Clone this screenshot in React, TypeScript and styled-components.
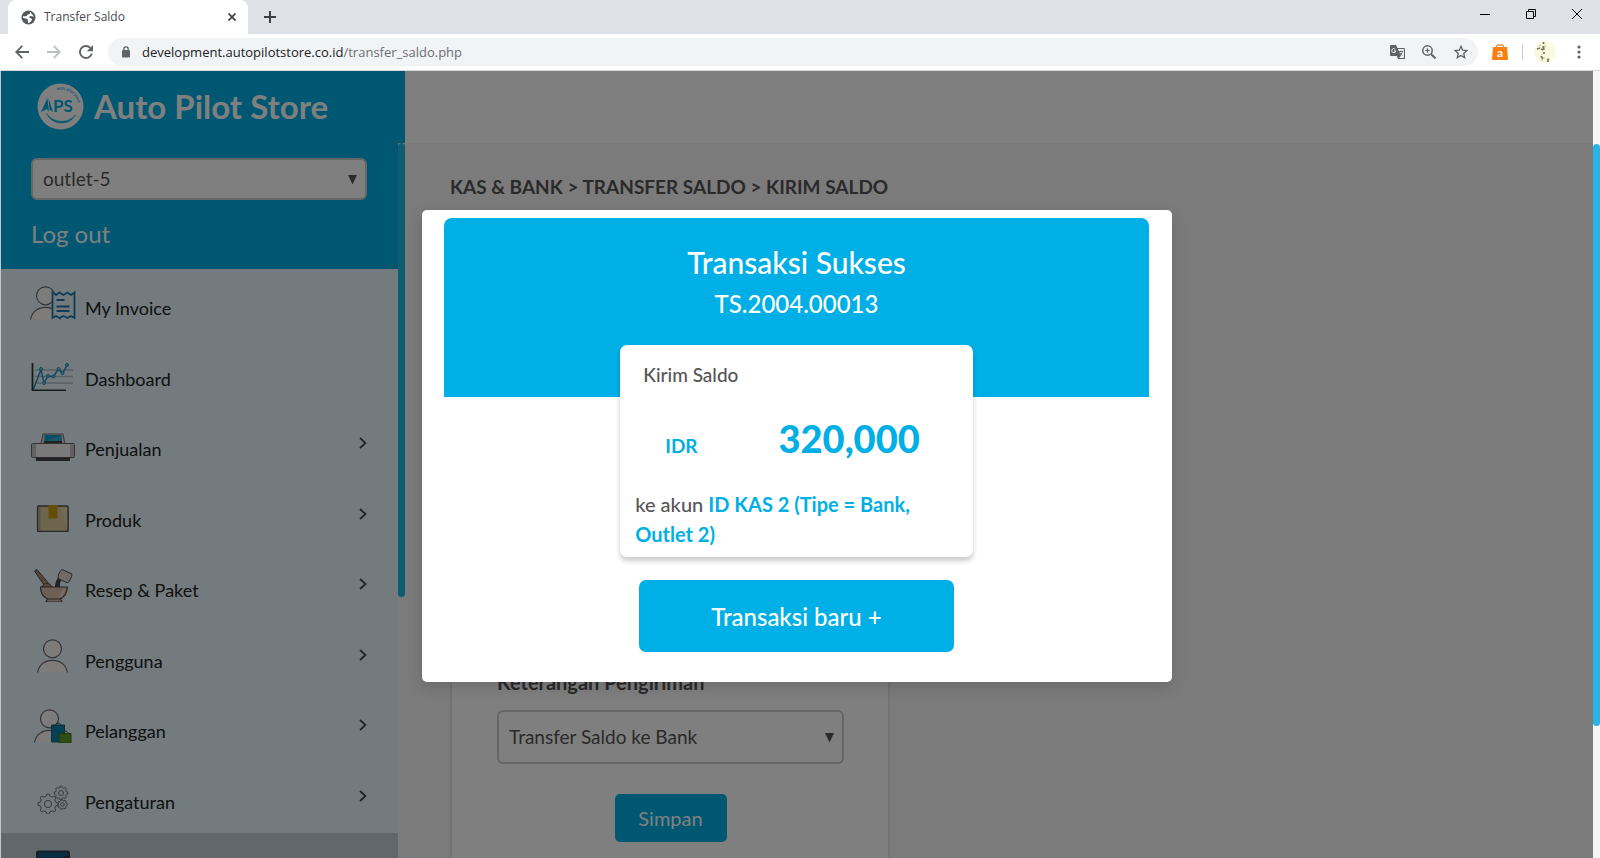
import React from "react";
import styled, { createGlobalStyle } from "styled-components";

const BLUE = "#00afe5";
const SANS = '"Lato", "Open Sans", "Liberation Sans", sans-serif';
const CHROME_FONT = '"Open Sans", "Noto Sans", sans-serif';

const GlobalStyle = createGlobalStyle`
  *, *::before, *::after { box-sizing: border-box; }
  body { margin: 0; font-family: ${SANS}; color: #555; background: #fff; }
  button, select { font: inherit; }
  svg { display: block; flex: none; }
`;

const Window = styled.div`
  height: 100vh;
  display: flex;
  flex-direction: column;
  overflow: hidden;
`;

/* ---------- browser frame ---------- */

const TabStrip = styled.div`
  display: flex;
  flex: none;
  height: 34px;
  padding-left: 8px;
  background: #dee1e6;
`;

const Tab = styled.div`
  display: flex;
  align-items: center;
  gap: 8px;
  width: 240px;
  padding: 0 10px 0 13px;
  border-radius: 8px 8px 0 0;
  background: #fff;
  font: 12px/16px ${CHROME_FONT};
  color: #45494d;
`;

const TabTitle = styled.span`
  flex: 1;
`;

const IconButton = styled.button<{ $w?: number }>`
  display: flex;
  align-items: center;
  justify-content: center;
  flex: none;
  width: ${(p) => p.$w ?? 32}px;
  padding: 0;
  border: 0;
  background: none;
  color: #5f6368;
`;

const WindowControls = styled.div`
  display: flex;
  margin-left: auto;
  padding-bottom: 6px;
`;

const Toolbar = styled.div`
  display: flex;
  flex: none;
  align-items: center;
  height: 37px;
  padding: 0 5px 0 6px;
  border-bottom: 1px solid #d5d7d9;
  background: #fff;
`;

const AddressBar = styled.div`
  display: flex;
  flex: 1;
  align-items: center;
  height: 28px;
  margin: 0 6px;
  padding: 0 1px 0 13px;
  border-radius: 14px;
  background: #f1f3f4;
  font: 13px/20px ${CHROME_FONT};
  color: #202124;
`;

const Url = styled.span`
  flex: 1;
  padding-left: 11px;
  span { color: #6b6f74; }
`;

const Divider = styled.span`
  width: 1px;
  height: 16px;
  margin: 0 4px 0 6px;
  background: #c8cacd;
`;

/* ---------- page ---------- */

const Viewport = styled.div`
  display: flex;
  flex: 1;
  min-height: 0;
  border-left: 1px solid #c4c8ca;
`;

const Page = styled.div`
  position: relative;
  display: flex;
  flex: 1;
  min-width: 0;
  overflow: hidden;
  background: #f6f6f6;
`;

const ScrollTrack = styled.div<{ $top?: number }>`
  flex: none;
  width: 7px;
  padding-top: ${(p) => p.$top ?? 0}px;
  background: #f6f6f6;
`;

const ScrollThumb = styled.div<{ $h: number; $color: string }>`
  height: ${(p) => p.$h}px;
  border-radius: 4px;
  background: ${(p) => p.$color};
`;

const Sidebar = styled.aside`
  display: flex;
  flex: none;
  flex-direction: column;
  width: 404px;
`;

const Brand = styled.div`
  display: flex;
  flex: none;
  align-items: center;
  gap: 10px;
  height: 72px;
  padding: 0 0 2px 36px;
  background: ${BLUE};
  color: #fff;
  font-size: 33px;
  line-height: 40px;
  font-weight: 700;
`;

const SidebarScroll = styled.div`
  display: flex;
  flex: 1;
  min-height: 0;
`;

const SidebarBody = styled.div`
  flex: 1;
  background: #e6f6fc;
`;

const Account = styled.div`
  height: 126px;
  padding: 15px 31px 0 30px;
  background: ${BLUE};
`;

const LogOut = styled.a`
  display: inline-block;
  margin-top: 18px;
  color: #fff;
  font-size: 24px;
  line-height: 32px;
  text-decoration: none;
`;

const SelectBox = styled.div`
  position: relative;
  svg {
    position: absolute;
    top: calc(50% - 4px);
    right: 10px;
    pointer-events: none;
  }
`;

const Select = styled.select<{ $h: number }>`
  appearance: none;
  display: block;
  width: 100%;
  height: ${(p) => p.$h}px;
  padding: 0 10px 1px;
  border: 2px solid #ccc;
  border-radius: 6px;
  background: #fff;
  color: #555;
  font-size: 19px;
`;

const Menu = styled.nav`
  display: flex;
  flex-direction: column;
  height: 564px;
`;

const MenuItem = styled.a`
  display: flex;
  flex: 1;
  align-items: flex-start;
  gap: 9px;
  padding: 17px 31px 0 29px;
  color: #222;
  font-size: 18px;
  line-height: 24px;
  text-decoration: none;
`;

const MenuLabel = styled.span`
  flex: 1;
  padding-top: 10px;
`;

const Chevron = styled.svg`
  margin-top: 10px;
`;

const ActiveItem = styled.a`
  display: block;
  height: 71px;
  padding: 17px 29px 0;
  background: #c5ced6;
`;

const Main = styled.main`
  flex: 1;
  min-width: 0;
`;

const TopBar = styled.div`
  height: 72px;
  background: #fff;
`;

const Content = styled.div`
  padding: 32px 45px 0;
`;

const Breadcrumb = styled.h1`
  margin: 0;
  font-size: 19px;
  line-height: 24px;
  font-weight: 700;
`;

const FormCard = styled.form`
  max-width: 440px;
  height: 720px;
  margin-top: 16px;
  padding: 453px 44px 0 45px;
  border: 2px solid #e6e6e6;
  background: #fff;
`;

const FieldLabel = styled.label`
  display: block;
  margin-bottom: 16px;
  font-size: 20px;
  line-height: 24px;
  font-weight: 700;
`;

const SubmitButton = styled.button`
  display: block;
  width: 112px;
  height: 48px;
  margin: 30px auto 0;
  border: 0;
  border-radius: 5px;
  background: ${BLUE};
  color: #fff;
  font-size: 20px;
`;

/* ---------- dialog ---------- */

const Backdrop = styled.div`
  position: absolute;
  inset: 0;
  padding-top: 139px;
  background: rgba(0, 0, 0, 0.5);
`;

const Dialog = styled.div`
  max-width: 750px;
  margin: 0 auto;
  padding: 8px 23px 30px 22px;
  border-radius: 5px;
  background: #fff;
  box-shadow: 0 5px 15px rgba(0, 0, 0, 0.15);
  text-align: center;
`;

const DialogHeader = styled.header`
  height: 179px;
  padding-top: 24px;
  border-radius: 8px 8px 0 0;
  background: ${BLUE};
  color: #fff;
`;

const DialogTitle = styled.h2`
  margin: 0;
  font-size: 30px;
  line-height: 40px;
  font-weight: 500;
`;

const DialogCode = styled.p`
  margin: 6px 0 0;
  font-size: 24px;
  line-height: 32px;
  font-weight: 500;
`;

const Receipt = styled.section`
  position: relative;
  width: 50%;
  margin: -52px auto 0;
  padding: 18px 15px 8px;
  border-radius: 7px;
  background: #fff;
  box-shadow: 0 4px 5px rgba(0, 0, 0, 0.2);
  font-size: 20px;
  line-height: 24px;
  text-align: left;
`;

const ReceiptTitle = styled.h3`
  margin: 0 8px;
  font-size: 19px;
  font-weight: 500;
`;

const Amount = styled.div`
  display: flex;
  align-items: baseline;
  justify-content: space-between;
  margin: 27px 38px 27px 30px;
  color: ${BLUE};
  font-size: 19px;
  font-weight: 700;
  strong { font-size: 38px; line-height: 48px; }
`;

const Target = styled.p`
  margin: 0;
  line-height: 30px;
  font-weight: 500;
  b { color: ${BLUE}; }
`;

const NewButton = styled.button`
  display: block;
  width: 315px;
  height: 72px;
  margin: 23px auto 0;
  border: 0;
  border-radius: 7px;
  background: ${BLUE};
  color: #fff;
  font-size: 24px;
  font-weight: 500;
`;

/* ---------- drawings ---------- */

const Caret = () => (
  <svg width="9" height="10" viewBox="0 0 9 10" fill="#555"><path d="M0 0h9L4.500 9.500z" /></svg>
);

const Logo = () => (
  <svg width="47" height="47" viewBox="0 0 47 47">
    <circle cx="23.500" cy="23.500" r="23" fill="#fff" />
    <path d="M9.500 30.500a16.500 16.500 0 0 0 29 1.500c-6.500 8-21 9.500-29-1.500z" fill={BLUE} stroke={BLUE} strokeWidth=".6" />
    <path d="M4 29 10.500 15 12 29l-2-3z M11.500 15 16 29l-3.500-2.500z" fill={BLUE} />
    <text x="16" y="29" fontFamily={SANS} fontSize="17" fill={BLUE}>PS</text>
    <path id="ring" d="M20 7a17.500 17.500 0 0 1 20 24" fill="none" />
    <text fontFamily={SANS} fontSize="4" fontWeight="700" fill={BLUE}>
      <textPath href="#ring">auto pilot store</textPath>
    </text>
  </svg>
);

const Person = ({ x }: { x: number }) => (
  <g transform={`translate(${x} 0)`} fill="#fcf7f7" stroke="#6a6a6c" strokeWidth="1.200">
    <circle cx="15.500" cy="9.800" r="9" />
    <path d="M.6 33.500C2 25.500 8 21.300 15.500 21.300S29 25.500 30.400 33.500" />
  </g>
);

const icons: Record<string, React.ReactNode> = {
  invoice: (
    <>
      <Person x={0} />
      <path d="M22.500 6.500l3.500 2.500 3.500-2.500 4 2.500 4-2.500 3.500 2.500 3.500-2.500v25.500l-3.500-2-3.500 2-4-2-4 2-3.500-2-3.500 2z" fill="#e6f2f8" stroke="#1c7aa5" strokeWidth="1.800" />
      <path d="M26.500 14h8M26.500 20.500h13M26.500 25h13" stroke="#1c7aa5" strokeWidth="1.800" />
    </>
  ),
  dashboard: (
    <>
      <path d="M5 13h38M5 19.500h38M5 26h38" stroke="#b5bdc0" strokeWidth="1.300" />
      <path d="M2.500 6v27.500H36" fill="none" stroke="#303438" strokeWidth="1.800" />
      <path d="M3.500 32 11 12.500l3 13.500 4-7 5.500.5 5-7.500 4 4.500 4.500-8" fill="none" stroke="#1495c0" strokeWidth="1.500" />
      {[[11, 12], [14, 26], [18, 19], [23.5, 19.5], [28.5, 12], [32.5, 16], [37, 8]].map(([cx, cy]) => (
        <circle key={cx} cx={cx} cy={cy} r="1.500" fill="#7ecbe2" stroke="#1495c0" />
      ))}
    </>
  ),
  printer: (
    <>
      <path d="M13 7h20l2 10H11z" fill="#cfd5d8" stroke="#777" />
      <path d="M14.500 8h17v6h-17z" fill="#0a9bca" />
      <path d="m14.500 14 17-6v6z" fill="#35a8cf" />
      <path d="M14 14h18v3H14z" fill="#444" />
      <rect x="1.500" y="16.500" width="43" height="14" rx="1" fill="#f4f4f4" stroke="#666" />
      <path d="M2 17h4v13H2zM40 17h4v13h-4z" fill="#c4c4c4" />
      <path d="M6 30.500h34V34H6z" fill="#444" />
    </>
  ),
  box: (
    <>
      <rect x="7.600" y="8" width="30.500" height="25.500" rx="1" fill="#dccb9f" stroke="#55504a" strokeWidth="1.400" />
      <path d="M8.500 9h2v24h-2z" fill="#b8a988" />
      <path d="m31 9 6 20V9z" fill="#e5d6b2" />
      <path d="M18.500 7h9v14l-1.500-1-1.500 1-1.500-1-1.500 1-1.500-1-1.500 1z" fill="#c99a0b" />
    </>
  ),
  bowl: (
    <>
      <path d="m4.500 3 2.500-1.500L20 17l-4 3z" fill="#a98b76" stroke="#554840" />
      <path d="M12 19c1-5 9-4 10 0z" fill="#c2997d" stroke="#554840" />
      <path d="M25 19c0-5 2-9 5-10l3 2c-3 1-3 5-3 8z" fill="#4a4444" />
      <path d="m32 1.500 10 4.500c0 3-2 7-4.500 9L28 10.500C28 7 29.500 3 32 1.500z" fill="#ddd5d0" stroke="#554f4c" />
      <path d="M10.500 19h27c-.5 6-3 10-7 12l1.500 3H16l1.500-3c-4-2-7-6-7-12z" fill="#d9c0ad" stroke="#554840" strokeWidth="1.200" />
      <path d="M34 20.500c-.5 4-2 6.500-5 8.500" stroke="#eee0d5" strokeWidth="2" fill="none" />
      <path d="M17.500 31h13" stroke="#554840" />
    </>
  ),
  user: <Person x={7} />,
  customer: (
    <>
      <Person x={4} />
      <path d="M21.500 16h13v17h-13z" fill="#0a83ac" stroke="#14617d" />
      <path d="M25 17c0-4 6-4 6 0" fill="none" stroke="#14617d" />
      <path d="M29 24.500h12V34H29z" fill="#5d9d2d" stroke="#3f6f20" />
      <path d="M32 25c0-4 6-4 6 0" fill="none" stroke="#3f6f20" />
    </>
  ),
  gears: (
    <g fill="none" stroke="#6d7478">
      <Gear cx={18} cy={24} r={8} teeth={8} />
      <Gear cx={31} cy={13} r={5.5} teeth={8} />
      <Gear cx={32.5} cy={24.5} r={4} teeth={7} />
    </g>
  ),
};

function Gear({ cx, cy, r, teeth }: { cx: number; cy: number; r: number; teeth: number }) {
  const points: string[] = [];
  for (let i = 0; i < teeth; i++) {
    [[-0.3, r], [-0.18, r * 1.25], [0.18, r * 1.25], [0.3, r]].forEach(([o, d]) => {
      const a = ((i + o) * 2 * Math.PI) / teeth;
      points.push(`${(cx + d * Math.cos(a)).toFixed(1)},${(cy + d * Math.sin(a)).toFixed(1)}`);
    });
  }
  return (
    <>
      <polygon points={points.join(" ")} />
      <circle cx={cx} cy={cy} r={r * 0.45} />
    </>
  );
}

const menu = [
  { label: "My Invoice", icon: "invoice", sub: false },
  { label: "Dashboard", icon: "dashboard", sub: false },
  { label: "Penjualan", icon: "printer", sub: true },
  { label: "Produk", icon: "box", sub: true },
  { label: "Resep & Paket", icon: "bowl", sub: true },
  { label: "Pengguna", icon: "user", sub: true },
  { label: "Pelanggan", icon: "customer", sub: true },
  { label: "Pengaturan", icon: "gears", sub: true },
];

function BrowserFrame() {
  return (
    <>
      <TabStrip>
        <Tab>
          <svg width="15" height="15" viewBox="0 0 15 15">
            <circle cx="7.500" cy="7.500" r="7" fill="#55595e" />
            <path d="M9 1.800c.3 2-.6 2.500-2 2.700-1.200.3-.6 1.500-1.800 1.700L2 6.300c-.6 2 1.500 2.200 3.500 2.200 1.500.2 1.300 1.500 1.200 2.500l.8 2.300c1.800-.3 2-2 3-2.800 1.200-1.200.3-2.200-1-2.300-1.500-.2-1.800-1.400-.5-2 1.500-.4 2.500.8 4 .2" fill="#fff" />
          </svg>
          <TabTitle>Transfer Saldo</TabTitle>
          <IconButton $w={12} aria-label="Close tab">
            <svg width="8" height="8" viewBox="0 0 8 8" stroke="#3c4043" strokeWidth="1.700"><path d="M.5.5l7 7M7.500.5l-7 7" /></svg>
          </IconButton>
        </Tab>
        <IconButton $w={44} aria-label="New tab">
          <svg width="12" height="12" viewBox="0 0 12 12" stroke="#3c4043" strokeWidth="2"><path d="M6 0v12M0 6h12" /></svg>
        </IconButton>
        <WindowControls>
          <IconButton $w={46} aria-label="Minimize">
            <svg width="10" height="10" viewBox="0 0 10 10" stroke="#000"><path d="M0 5.500h10" /></svg>
          </IconButton>
          <IconButton $w={46} aria-label="Restore">
            <svg width="10" height="10" viewBox="0 0 10 10" stroke="#000" fill="none"><path d="M.5 2.500h7v7h-7zM2.500 2.500v-2h7v7h-2" /></svg>
          </IconButton>
          <IconButton $w={46} aria-label="Close">
            <svg width="10" height="10" viewBox="0 0 10 10" stroke="#000"><path d="M0 0l10 10M10 0L0 10" /></svg>
          </IconButton>
        </WindowControls>
      </TabStrip>
      <Toolbar>
        <IconButton aria-label="Back">
          <svg width="14" height="14" viewBox="0 0 14 14" fill="none" stroke="#5f6368" strokeWidth="1.800"><path d="M14 7H1.500M7.300.8 1.200 7l6.100 6.200" /></svg>
        </IconButton>
        <IconButton aria-label="Forward">
          <svg width="14" height="14" viewBox="0 0 14 14" fill="none" stroke="#bdc0c3" strokeWidth="1.800"><path d="M0 7h12.500M6.700.8 12.800 7l-6.100 6.200" /></svg>
        </IconButton>
        <IconButton aria-label="Reload">
          <svg width="14" height="14" viewBox="0 0 14 14"><path d="M12.800 8.500A6 6 0 1 1 11.300 2.800" fill="none" stroke="#5f6368" strokeWidth="1.900" /><path d="M14 0v6.200H7.800z" fill="#5f6368" /></svg>
        </IconButton>
        <AddressBar>
          <svg width="10" height="12" viewBox="0 0 10 12"><rect x="1" y="4" width="8" height="7.500" rx="1" fill="#5f6368" /><path d="M2.800 5V3a2.200 2.200 0 0 1 4.400 0v2" fill="none" stroke="#5f6368" strokeWidth="1.300" /></svg>
          <Url>development.autopilotstore.co.id<span>/transfer_saldo.php</span></Url>
          <IconButton aria-label="Translate">
            <svg width="15" height="15" viewBox="0 0 15 15">
              <path d="M1 0h5l1.500 3H14a1 1 0 0 1 1 1v10H8L6.800 11H1a1 1 0 0 1-1-1V1a1 1 0 0 1 1-1z" fill="#5f6368" />
              <path d="M7.900 4h6v9H9l2-2.200z" fill="#f1f3f4" />
              <path d="M9 6.500h4M11 5.500v1M12.300 6.500c-.5 2-1.600 3-2.600 3.600M9.700 7.500c.6 1.300 1.600 2.200 2.600 2.700" fill="none" stroke="#5f6368" strokeWidth=".9" />
              <path d="M5.200 4.300A2 2 0 1 0 5.700 6H4" fill="none" stroke="#f1f3f4" />
            </svg>
          </IconButton>
          <IconButton aria-label="Zoom">
            <svg width="14" height="14" viewBox="0 0 14 14" fill="none" stroke="#5f6368" strokeWidth="1.500"><circle cx="5.500" cy="5.500" r="4.700" /><path d="m9 9 4.500 4.500" strokeWidth="2" /><path d="M5.500 3.200v4.600M3.200 5.500h4.600" strokeWidth="1.200" /></svg>
          </IconButton>
          <IconButton aria-label="Bookmark">
            <svg width="14" height="14" viewBox="0 0 14 14" fill="none" stroke="#5f6368" strokeWidth="1.300"><path d="m7 1.300 1.700 3.900 4.200.4-3.200 2.800 1 4.200L7 10.400l-3.700 2.200 1-4.200L1.100 5.600l4.200-.4z" /></svg>
          </IconButton>
        </AddressBar>
        <IconButton aria-label="Shopping extension">
          <svg width="16" height="16" viewBox="0 0 16 16">
            <path d="M1 3h14l1 12a1 1 0 0 1-1 1H1a1 1 0 0 1-1-1z" fill="#fb7d0b" />
            <path d="M4.500 5V3a2 2 0 0 1 2-2h3a2 2 0 0 1 2 2v2" fill="none" stroke="#e8964a" strokeWidth="1.300" />
            <text x="8" y="13" textAnchor="middle" fontFamily={SANS} fontSize="12" fontWeight="700" fill="#fff">a</text>
          </svg>
        </IconButton>
        <Divider />
        <IconButton $w={36} aria-label="Profile">
          <svg width="22" height="22" viewBox="0 0 22 22">
            <circle cx="11" cy="11" r="11" fill="#fbfae0" />
            <path d="M9.500 1v2M9 5l1 4M3 8l3-1M7 8l2 1M10 11v2M7 15l2 3M13 19l2-1M14 21v-3" stroke="#77745c" strokeWidth="1.700" />
            <path d="M11 4v3M5 5l2-1M8 17v3M10 16v2" stroke="#b9b68f" />
          </svg>
        </IconButton>
        <IconButton aria-label="Menu">
          <svg width="4" height="14" viewBox="0 0 4 14" fill="#5f6368"><circle cx="2" cy="2" r="1.600" /><circle cx="2" cy="7" r="1.600" /><circle cx="2" cy="12" r="1.600" /></svg>
        </IconButton>
      </Toolbar>
    </>
  );
}

export default function App() {
  return (
    <Window>
      <GlobalStyle />
      <BrowserFrame />
      <Viewport>
        <Page>
          <Sidebar>
            <Brand><Logo />Auto Pilot Store</Brand>
            <SidebarScroll>
              <SidebarBody>
                <Account>
                  <SelectBox>
                    <Select $h={42} aria-label="Outlet"><option>outlet-5</option></Select>
                    <Caret />
                  </SelectBox>
                  <LogOut href="#">Log out</LogOut>
                </Account>
                <Menu>
                  {menu.map((item) => (
                    <MenuItem href="#" key={item.label}>
                      <svg width="46" height="34" viewBox="0 0 46 34">{icons[item.icon]}</svg>
                      <MenuLabel>{item.label}</MenuLabel>
                      {item.sub && (
                        <Chevron width="8" height="12" viewBox="0 0 8 12" fill="none" stroke="#444" strokeWidth="1.700"><path d="m1 1 5.500 5L1 11" /></Chevron>
                      )}
                    </MenuItem>
                  ))}
                </Menu>
                <ActiveItem href="#" aria-label="Kas">
                  <svg width="46" height="34" viewBox="0 0 46 34"><rect x="7" y="1.500" width="32" height="32" rx="1.500" fill="#155a85" stroke="#2b3c4e" strokeWidth="2" /><path d="m33 8 3-3 2 3z" fill="#2b3c4e" /></svg>
                </ActiveItem>
              </SidebarBody>
              <ScrollTrack><ScrollThumb $h={454} $color="#1fb8e4" /></ScrollTrack>
            </SidebarScroll>
          </Sidebar>
          <Main>
            <TopBar />
            <Content>
              <Breadcrumb>KAS &amp; BANK &gt; TRANSFER SALDO &gt; KIRIM SALDO</Breadcrumb>
              <FormCard>
                <FieldLabel htmlFor="note">Keterangan Pengiriman</FieldLabel>
                <SelectBox>
                  <Select id="note" $h={54}><option>Transfer Saldo ke Bank</option></Select>
                  <Caret />
                </SelectBox>
                <SubmitButton type="button">Simpan</SubmitButton>
              </FormCard>
            </Content>
          </Main>
          <Backdrop>
            <Dialog role="dialog" aria-labelledby="dialog-title">
              <DialogHeader>
                <DialogTitle id="dialog-title">Transaksi Sukses</DialogTitle>
                <DialogCode>TS.2004.00013</DialogCode>
              </DialogHeader>
              <Receipt>
                <ReceiptTitle>Kirim Saldo</ReceiptTitle>
                <Amount><span>IDR</span><strong>320,000</strong></Amount>
                <Target>ke akun <b>ID KAS 2 (Tipe = Bank, Outlet 2)</b></Target>
              </Receipt>
              <NewButton type="button">Transaksi baru +</NewButton>
            </Dialog>
          </Backdrop>
        </Page>
        <ScrollTrack $top={73}><ScrollThumb $h={582} $color="#28b5e6" /></ScrollTrack>
      </Viewport>
    </Window>
  );
}
